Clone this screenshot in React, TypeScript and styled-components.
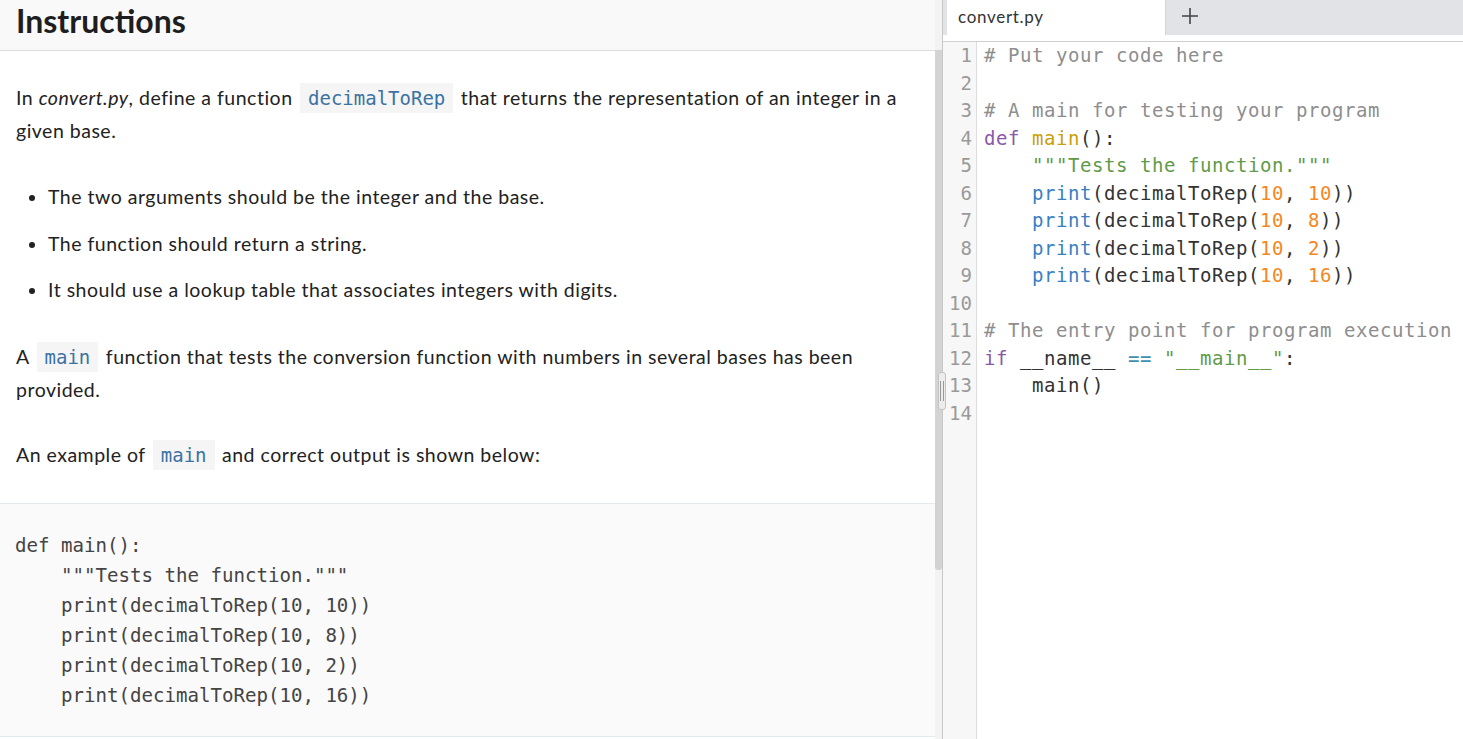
import React from "react";
import styled, { createGlobalStyle } from "styled-components";

const Global = createGlobalStyle`
  html, body { margin: 0; padding: 0; background: #fff; }
  body { font-family: Lato, "Noto Sans", sans-serif; color: #222; }
`;

const Page = styled.div`
  display: flex;
  width: 1463px;
  height: 739px;
  overflow: hidden;
`;

const LeftPane = styled.div`
  display: flex;
  width: 942px;
  border-right: 1px solid #c8c8c8;
  flex-shrink: 0;
`;

const LeftScroll = styled.div`
  flex: 1;
  display: flex;
  flex-direction: column;
  overflow: hidden;
`;

const Scrollbar = styled.div`
  width: 7px;
  background: #f3f3f3;
  display: flex;
  flex-direction: column;
  padding-top: 50px;
`;

const Thumb = styled.div`
  height: 520px;
  background: #d3d3d3;
  border-radius: 0 0 3px 3px;
`;

const Header = styled.div`
  height: 50px;
  background: #f9f9f9;
  border-bottom: 1px solid #dcdcdc;
  display: flex;
  align-items: center;
  padding: 0 16px;
  box-sizing: content-box;
`;

const Title = styled.h1`
  margin: 0;
  margin-top: -10px;
  font-family: Lato, sans-serif;
  font-weight: 700;
  font-size: 32px;
  color: #1e1e1e;
`;

const Body = styled.div`
  padding: 31px 16px 0 16px;
  display: flex;
  flex-direction: column;
`;

const Para = styled.p<{ $mt?: number }>`
  margin: ${(p) => p.$mt ?? 0}px 0 0 0;
  font-size: 19.5px;
  letter-spacing: 0.5px;
  line-height: 32.5px;
  color: #222;
`;

const InlineCode = styled.code`
  display: inline-block;
  font-family: "DejaVu Sans Mono", monospace;
  font-variant-numeric: slashed-zero;
  font-size: 19px;
  line-height: 30px;
  letter-spacing: 0;
  color: #3c72a2;
  background: #f5f5f5;
  padding: 0 8px;
  margin: 0 2px;
`;

const List = styled.ul`
  margin: 34px 0 0 0;
  padding-left: 32px;
  display: flex;
  flex-direction: column;
  gap: 14.5px;
`;

const Item = styled.li`
  font-size: 19.5px;
  letter-spacing: 0.5px;
  line-height: 32px;
  color: #222;
`;

const CodeBlock = styled.pre`
  margin: 31px 0 0 0;
  padding: 27px 15px 25px 15px;
  background: #fafafa;
  border-top: 1px solid #e3ebee;
  border-bottom: 1px solid #e3ebee;
  font-family: "DejaVu Sans Mono", monospace;
  font-variant-numeric: slashed-zero;
  font-size: 19.1px;
  line-height: 30px;
  color: #444;
`;

const RightPane = styled.div`
  flex: 1;
  display: flex;
  flex-direction: column;
  position: relative;
`;

const TabBar = styled.div`
  height: 35px;
  display: flex;
  background: #e1e3e7;
  padding-left: 4px;
  border-bottom: 6px solid #fff;
`;

const Tab = styled.div`
  width: 218px;
  background: #fff;
  display: flex;
  align-items: center;
  padding: 0 0 3px 11px;
  box-sizing: border-box;
  font-size: 17px;
  letter-spacing: 0.7px;
  color: #333;
`;

const AddTab = styled.div`
  display: flex;
  align-items: center;
  padding-left: 15px;
  border-left: 1px solid #d4d6da;
  color: #444;
  margin-top: -4px;
`;

const Editor = styled.div`
  flex: 1;
  display: flex;
  border-top: 1px solid #d0d0d0;
`;

const Gutter = styled.div`
  width: 34px;
  box-sizing: border-box;
  background: #f7f7f7;
  border-right: 1px solid #dddddd;
  display: flex;
  flex-direction: column;
  align-items: flex-end;
  padding-right: 4px;
  font-family: "DejaVu Sans Mono", monospace;
  font-variant-numeric: slashed-zero;
  font-size: 19px;
  line-height: 27.5px;
  color: #9a9a9a;
`;

const Lines = styled.pre`
  margin: 0;
  padding-left: 7px;
  font-family: "DejaVu Sans Mono", monospace;
  font-variant-numeric: slashed-zero;
  font-size: 19px;
  letter-spacing: 0.56px;
  line-height: 27.5px;
  color: #333;
`;

const Tok = styled.span<{ $c: string }>`
  color: ${(p) => p.$c};
`;

const Handle = styled.div`
  position: absolute;
  left: -5px;
  top: 372px;
  width: 8px;
  height: 38px;
  background: #ececec;
  border: 1px solid #c4c4c4;
  border-radius: 3px;
  box-sizing: border-box;
  display: flex;
  justify-content: center;
  gap: 2px;
  padding: 8px 0;
`;

const Grip = styled.div`
  width: 1px;
  background: #999;
`;

const C = {
  cm: "#8e8e8e",
  kw: "#8959a8",
  fn: "#c9a00a",
  st: "#5f9b48",
  bi: "#3b7fc0",
  nu: "#f5871f",
  op: "#3e8fb0",
  tx: "#333",
};

export default function App() {
  return (
    <>
      <Global />
      <Page>
        <LeftPane>
          <LeftScroll>
            <Header>
              <Title>Instructions</Title>
            </Header>
            <Body>
              <Para>
                In <em>convert.py</em>, define a function <InlineCode>decimalToRep</InlineCode> that
                returns the representation of an integer in a given base.
              </Para>
              <List>
                <Item>The two arguments should be the integer and the base.</Item>
                <Item>The function should return a string.</Item>
                <Item>It should use a lookup table that associates integers with digits.</Item>
              </List>
              <Para $mt={35}>
                A <InlineCode>main</InlineCode> function that tests the conversion function with
                numbers in several bases has been provided.
              </Para>
              <Para $mt={33}>
                An example of <InlineCode>main</InlineCode> and correct output is shown below:
              </Para>
            </Body>
            <CodeBlock>{`def main():
    """Tests the function."""
    print(decimalToRep(10, 10))
    print(decimalToRep(10, 8))
    print(decimalToRep(10, 2))
    print(decimalToRep(10, 16))`}</CodeBlock>
          </LeftScroll>
          <Scrollbar>
            <Thumb />
          </Scrollbar>
        </LeftPane>
        <RightPane>
          <Handle>
            <Grip />
            <Grip />
          </Handle>
          <TabBar>
            <Tab>convert.py</Tab>
            <AddTab>
              <svg width="18" height="18" viewBox="0 0 18 18">
                <path d="M9 1v16M1 9h16" stroke="#444" strokeWidth="1.6" />
              </svg>
            </AddTab>
          </TabBar>
          <Editor>
            <Gutter>
              {Array.from({ length: 14 }, (_, i) => (
                <span key={i}>{i + 1}</span>
              ))}
            </Gutter>
            <Lines>
              <Tok $c={C.cm}># Put your code here</Tok>
              {"\n\n"}
              <Tok $c={C.cm}># A main for testing your program</Tok>
              {"\n"}
              <Tok $c={C.kw}>def</Tok> <Tok $c={C.fn}>main</Tok>():{"\n"}
              {"    "}
              <Tok $c={C.st}>"""Tests the function."""</Tok>
              {"\n"}
              {[10, 8, 2, 16].map((b) => (
                <React.Fragment key={b}>
                  {"    "}
                  <Tok $c={C.bi}>print</Tok>(decimalToRep(<Tok $c={C.nu}>10</Tok>,{" "}
                  <Tok $c={C.nu}>{b}</Tok>)){"\n"}
                </React.Fragment>
              ))}
              {"\n"}
              <Tok $c={C.cm}># The entry point for program execution</Tok>
              {"\n"}
              <Tok $c={C.kw}>if</Tok> __name__ <Tok $c={C.op}>==</Tok>{" "}
              <Tok $c={C.st}>"__main__"</Tok>:{"\n"}
              {"    "}main(){"\n"}
            </Lines>
          </Editor>
        </RightPane>
      </Page>
    </>
  );
}
